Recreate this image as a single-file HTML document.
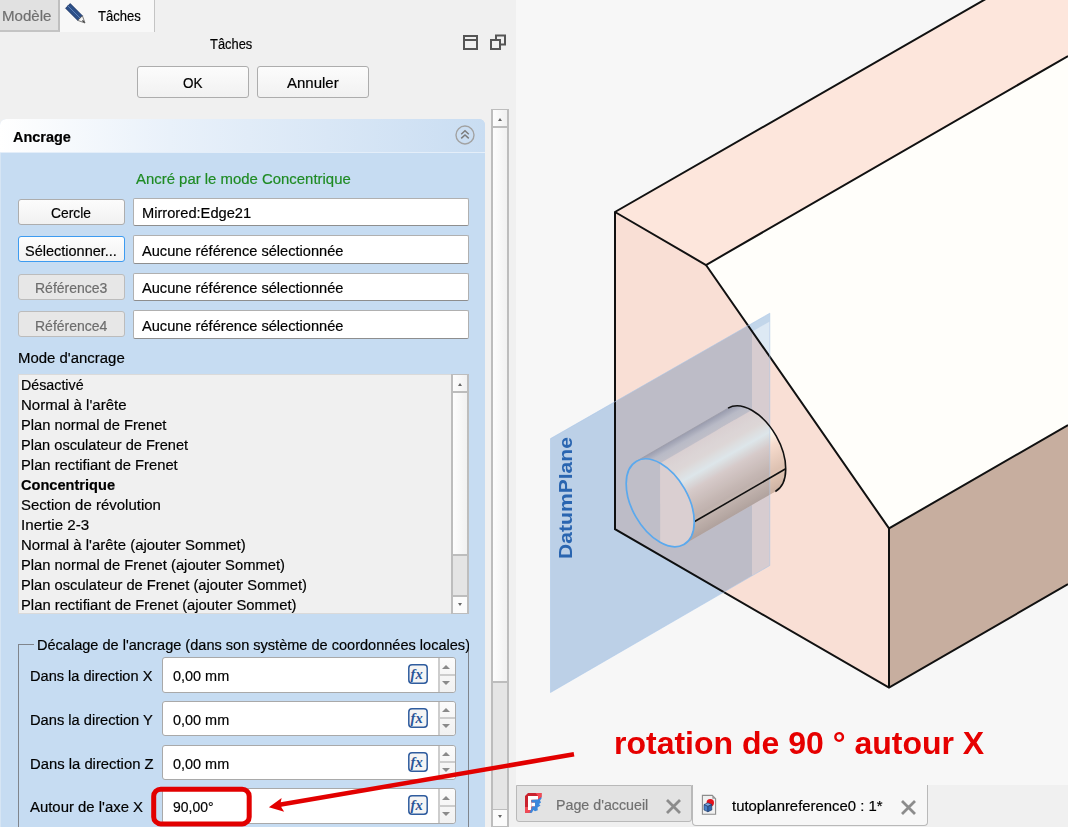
<!DOCTYPE html>
<html><head><meta charset="utf-8">
<style>
*{box-sizing:border-box;margin:0;padding:0}
html,body{width:1068px;height:827px;overflow:hidden;background:#f0f0f0;font-family:"Liberation Sans",sans-serif;color:#000}
.a{position:absolute}
.t{position:absolute;white-space:nowrap;font-size:14.7px;line-height:17px;transform-origin:0 0;-webkit-text-stroke:0.2px currentColor}
.btn{position:absolute;background:linear-gradient(#fcfcfc,#f1f1f1);border:1px solid #adadad;border-radius:3px}
.inp{position:absolute;background:#fff;border:1px solid #b0b0b0;border-bottom-color:#8e8e8e;border-radius:2px}
</style></head><body>
<!-- 3D view -->
<svg class="a" style="left:516px;top:0;isolation:isolate" width="552" height="786" viewBox="516 0 552 786">
<defs>
<linearGradient id="cyl" gradientUnits="userSpaceOnUse" x1="636.54" y1="461.15" x2="683.86" y2="544.45">
<stop offset="0" stop-color="#cdbcbc"/>
<stop offset="0.07" stop-color="#f3ddd4"/>
<stop offset="0.13" stop-color="#fbe2d6"/>
<stop offset="0.3" stop-color="#ffebdd"/>
<stop offset="0.42" stop-color="#fffbf0"/>
<stop offset="0.55" stop-color="#f7dcce"/>
<stop offset="0.8" stop-color="#ddc1b1"/>
<stop offset="0.83" stop-color="#e2c6b4"/>
<stop offset="1" stop-color="#cbb0a1"/>
</linearGradient>
<clipPath id="plane"><polygon points="550.5,438.6 769.8,313.2 769.8,565.5 550.5,692.5"/></clipPath>
<clipPath id="halfH"><polygon points="660.20,463.22 934.70,304.22 934.70,900 660.20,900"/></clipPath>
<mask id="mfull" maskUnits="userSpaceOnUse" x="516" y="0" width="552" height="786">
<polygon points="550.5,438.6 769.8,313.2 769.8,565.5 550.5,692.5" fill="#fff"/>
<polygon points="752,331.7 769.8,321.4 769.8,565.5 752,575.9" fill="#000"/>
<g clip-path="url(#halfH)"><path d="M728.04,408.15 A47.9,28.1 60.4 1 1 775.36,491.45 A47.9,28.1 60.4 1 1 728.04,408.15 Z" fill="#000"/><polygon points="636.54,461.15 728.04,408.15 775.36,491.45 683.86,544.45" fill="#000"/><path d="M636.54,461.15 A47.9,28.1 60.4 1 1 683.86,544.45 A47.9,28.1 60.4 1 1 636.54,461.15 Z" fill="#000"/></g>
</mask>
</defs>
<rect x="516" y="0" width="552" height="786" fill="#f7f7f7"/>
<polygon points="615,212 984.3,0 1068,0 1068,56 706,265" fill="#fde6dc"/>
<polygon points="706,265 1068,56 1068,425 889,528.4" fill="#fffefa"/>
<polygon points="615,212 706,265 889,528.4 889,687.5 615,529.2" fill="#f9dfd5"/>
<polygon points="889,528.4 1068,425 1068,584.2 889,687.5" fill="#c7ae9f"/>
<path d="M728.04,408.15 A47.9,28.1 60.4 1 1 775.36,491.45 A47.9,28.1 60.4 1 1 728.04,408.15 Z" fill="url(#cyl)"/>
<polygon points="636.54,461.15 728.04,408.15 775.36,491.45 683.86,544.45" fill="url(#cyl)"/>
<path d="M636.54,461.15 A47.9,28.1 60.4 1 1 683.86,544.45 A47.9,28.1 60.4 1 1 636.54,461.15 Z" fill="#fce2d6"/>
<g stroke="#111" stroke-width="2" fill="none" stroke-linejoin="miter">
<polyline points="1001.4,-10 615,212 615,529.2 889,687.5 1068,584.2"/>
<polyline points="615,212 706,265 1068,56"/>
<polyline points="706,265 889,528.4 1068,425"/>
<line x1="889" y1="528.4" x2="889" y2="687.5"/>
</g>
<g style="mix-blend-mode:multiply"><rect x="516" y="0" width="552" height="786" fill="#c2d7ef" mask="url(#mfull)"/></g>
<g style="mix-blend-mode:multiply" clip-path="url(#plane)">
<polygon points="752,331.7 769.8,321.4 769.8,565.5 752,575.9" fill="#ddeaf9"/>
<g clip-path="url(#halfH)"><path d="M728.04,408.15 A47.9,28.1 60.4 1 1 775.36,491.45 A47.9,28.1 60.4 1 1 728.04,408.15 Z" fill="#ddeaf9"/><polygon points="636.54,461.15 728.04,408.15 775.36,491.45 683.86,544.45" fill="#ddeaf9"/><path d="M636.54,461.15 A47.9,28.1 60.4 1 1 683.86,544.45 A47.9,28.1 60.4 1 1 636.54,461.15 Z" fill="#ddeaf9"/></g>
</g>
<polygon points="550.5,438.6 769.8,313.2 769.8,565.5 550.5,692.5" fill="none" stroke="#a9c6e8" stroke-width="0.8" opacity="0.7"/>

<line x1="636.54" y1="461.15" x2="728.04" y2="408.15" stroke="#9a9aa5" stroke-width="0.7"/>
<path d="M728.04,408.15 A47.9,28.1 60.4 0 1 775.36,491.45" fill="none" stroke="#111" stroke-width="1.6"/>
<line x1="694.21" y1="521.80" x2="785.71" y2="468.80" stroke="#111" stroke-width="1.6"/>
<path d="M636.54,461.15 A47.9,28.1 60.4 1 1 683.86,544.45 A47.9,28.1 60.4 1 1 636.54,461.15 Z" fill="none" stroke="#5aa9ee" stroke-width="1.7"/>
<text transform="translate(572,559) rotate(-90)" font-family="Liberation Sans" font-weight="bold" font-size="17.5" fill="#2a65b0" textLength="122" lengthAdjust="spacingAndGlyphs">DatumPlane</text>
<text x="614" y="754.3" font-family="Liberation Sans" font-weight="bold" font-size="32" fill="#e60000">rotation de 90 ° autour X</text>
</svg>

<!-- left panel -->
<div class="a" style="left:0;top:0;width:508px;height:827px;background:#f0f0f0"></div>

<div class="a" style="left:0;top:0;width:60px;height:32px;background:#e1e1e1;border-right:2px solid #bfbfbf;border-bottom:2px solid #c4c4c4"></div>
<div class="a" style="left:60px;top:0;width:95px;height:32px;background:#f8f8f8;border-right:1px solid #c4c4c4"></div>
<svg class="a" style="left:64px;top:2px" width="24" height="24" viewBox="0 0 24 24">
<polygon points="1.6,6.2 6.2,1.6 18.4,13.8 13.8,18.4" fill="#2c4f88" stroke="#18305e" stroke-width="0.8"/>
<line x1="3.5" y1="3.5" x2="16" y2="16" stroke="#5f82b8" stroke-width="1"/>
<polygon points="18.4,13.8 13.8,18.4 21,21" fill="#f4f4f4" stroke="#444" stroke-width="0.7"/>
<polygon points="19,18 18,19 20.8,20.8" fill="#111"/>
</svg>
<svg class="a" style="left:462px;top:34px" width="46" height="18" viewBox="0 0 46 18">
<rect x="2" y="2" width="13" height="13" fill="none" stroke="#555" stroke-width="2"/>
<line x1="2" y1="6" x2="15" y2="6" stroke="#555" stroke-width="2"/>
<rect x="34" y="1.5" width="9" height="9" fill="none" stroke="#555" stroke-width="2"/>
<rect x="29" y="6" width="9" height="9" fill="#f0f0f0" stroke="#555" stroke-width="2"/>
</svg>
<div class="btn" style="left:136.5px;top:65.5px;width:112px;height:32px"></div>
<div class="btn" style="left:256.5px;top:65.5px;width:112px;height:32px"></div>
<!-- outer scrollbar -->
<div class="a" style="left:491px;top:109px;width:18px;height:718px;background:linear-gradient(90deg,#fdfdfd,#f1f1f1);border:2px solid #bdbdbd;border-top-width:1px"></div>
<div class="a" style="left:492px;top:126px;width:16px;height:2px;background:#bcbcbc"></div>
<div class="a" style="left:497.8px;top:118px;width:0;height:0;border-left:2.5px solid transparent;border-right:2.5px solid transparent;border-bottom:3px solid #666"></div>
<div class="a" style="left:491px;top:681px;width:18px;height:129px;background:#e5e5e5;border:2px solid #bdbdbd;border-bottom-width:1px"></div>
<div class="a" style="left:491px;top:810px;width:18px;height:17px;background:#fbfbfb;border:2px solid #bdbdbd;border-top:none;border-bottom-width:1px"></div>
<div class="a" style="left:497.8px;top:815px;width:0;height:0;border-left:2.5px solid transparent;border-right:2.5px solid transparent;border-top:3px solid #666"></div>
<!-- panel -->
<div class="a" style="left:0;top:119px;width:485px;height:708px;background:#c6dcf2;border-radius:6px 6px 0 0;border-left:1px solid #d6e5f4"></div>
<div class="a" style="left:0;top:119px;width:485px;height:34px;background:linear-gradient(90deg,#ffffff 0%,#e9f1fa 35%,#c9ddf2 100%);border-radius:6px 6px 0 0;border-bottom:1px solid #e4eef9"></div>
<svg class="a" style="left:454px;top:124px" width="22" height="22" viewBox="0 0 22 22">
<circle cx="11" cy="11" r="9" fill="none" stroke="#a2a2a2" stroke-width="1.4"/>
<path d="M7.2,10.2 L11,6.8 L14.8,10.2 M7.2,14.4 L11,11 L14.8,14.4" fill="none" stroke="#7c7c7c" stroke-width="1.5"/>
</svg>
<div class="btn" style="left:18px;top:198.5px;width:106.5px;height:26px"></div>
<div class="inp" style="left:133px;top:197.5px;width:336px;height:28.5px"></div>
<div class="btn" style="left:18px;top:236.0px;width:106.5px;height:26px;border:1.5px solid #3d9bf0;background:linear-gradient(#fdfdfd,#f2f2f2)"></div>
<div class="inp" style="left:133px;top:235.0px;width:336px;height:28.5px"></div>
<div class="btn" style="left:18px;top:273.5px;width:106.5px;height:26px;background:#e7e7e7;border-color:#bcbcbc"></div>
<div class="inp" style="left:133px;top:272.5px;width:336px;height:28.5px"></div>
<div class="btn" style="left:18px;top:311.0px;width:106.5px;height:26px;background:#e7e7e7;border-color:#bcbcbc"></div>
<div class="inp" style="left:133px;top:310.0px;width:336px;height:28.5px"></div>
<div class="a" style="left:18px;top:374px;width:451px;height:240px;background:#f0f0f0;border:1px solid #dadada"></div>
<div class="a" style="left:451px;top:374px;width:18px;height:240px;background:linear-gradient(90deg,#fdfdfd,#f1f1f1);border:2px solid #bdbdbd;border-top-width:1px;border-bottom-width:1px"></div>
<div class="a" style="left:452px;top:391px;width:16px;height:2px;background:#bcbcbc"></div>
<div class="a" style="left:451px;top:554px;width:18px;height:43px;background:#e4e4e4;border:2px solid #bdbdbd"></div>
<div class="a" style="left:451px;top:596px;width:18px;height:18px;background:#fbfbfb;border:2px solid #bdbdbd;border-top-width:1px;border-bottom-width:1px"></div>
<div class="a" style="left:458px;top:383px;width:0;height:0;border-left:2.5px solid transparent;border-right:2.5px solid transparent;border-bottom:3px solid #666"></div>
<div class="a" style="left:458px;top:603px;width:0;height:0;border-left:2.5px solid transparent;border-right:2.5px solid transparent;border-top:3px solid #666"></div>
<div class="a" style="left:18px;top:644px;width:451px;height:200px;border:1px solid #80858c"></div>
<div class="a" style="left:34px;top:636px;width:434px;height:16px;background:#c6dcf2"></div>
<div class="inp" style="left:161.5px;top:657.00px;width:294px;height:35.5px;border-radius:3px;border-color:#a9a9a9"></div>
<div class="a" style="left:438px;top:658.00px;width:17px;height:33.5px;background:linear-gradient(#fbfbfb,#f1f1f1);border-left:2px solid #cdcdcd;border-radius:0 3px 3px 0"></div>
<div class="a" style="left:438px;top:673.50px;width:17px;height:2px;background:#cdcdcd"></div>
<div class="a" style="left:442px;top:664.50px;width:0;height:0;border-left:4px solid transparent;border-right:4px solid transparent;border-bottom:4.5px solid #8a8a8a"></div>
<div class="a" style="left:442px;top:680.50px;width:0;height:0;border-left:4px solid transparent;border-right:4px solid transparent;border-top:4.5px solid #8a8a8a"></div>
<svg class="a" style="left:408px;top:664.00px" width="20" height="20" viewBox="0 0 20 20"><rect x="0.8" y="0.8" width="18.4" height="18.4" rx="3.2" fill="#f4f4f4" stroke="#2f5c9e" stroke-width="1.5"/><text x="2.6" y="14.6" font-family="Liberation Serif" font-style="italic" font-size="14.5" fill="#2a5598" font-weight="bold">fx</text></svg>
<div class="inp" style="left:161.5px;top:700.75px;width:294px;height:35.5px;border-radius:3px;border-color:#a9a9a9"></div>
<div class="a" style="left:438px;top:701.75px;width:17px;height:33.5px;background:linear-gradient(#fbfbfb,#f1f1f1);border-left:2px solid #cdcdcd;border-radius:0 3px 3px 0"></div>
<div class="a" style="left:438px;top:717.25px;width:17px;height:2px;background:#cdcdcd"></div>
<div class="a" style="left:442px;top:708.25px;width:0;height:0;border-left:4px solid transparent;border-right:4px solid transparent;border-bottom:4.5px solid #8a8a8a"></div>
<div class="a" style="left:442px;top:724.25px;width:0;height:0;border-left:4px solid transparent;border-right:4px solid transparent;border-top:4.5px solid #8a8a8a"></div>
<svg class="a" style="left:408px;top:707.75px" width="20" height="20" viewBox="0 0 20 20"><rect x="0.8" y="0.8" width="18.4" height="18.4" rx="3.2" fill="#f4f4f4" stroke="#2f5c9e" stroke-width="1.5"/><text x="2.6" y="14.6" font-family="Liberation Serif" font-style="italic" font-size="14.5" fill="#2a5598" font-weight="bold">fx</text></svg>
<div class="inp" style="left:161.5px;top:744.50px;width:294px;height:35.5px;border-radius:3px;border-color:#a9a9a9"></div>
<div class="a" style="left:438px;top:745.50px;width:17px;height:33.5px;background:linear-gradient(#fbfbfb,#f1f1f1);border-left:2px solid #cdcdcd;border-radius:0 3px 3px 0"></div>
<div class="a" style="left:438px;top:761.00px;width:17px;height:2px;background:#cdcdcd"></div>
<div class="a" style="left:442px;top:752.00px;width:0;height:0;border-left:4px solid transparent;border-right:4px solid transparent;border-bottom:4.5px solid #8a8a8a"></div>
<div class="a" style="left:442px;top:768.00px;width:0;height:0;border-left:4px solid transparent;border-right:4px solid transparent;border-top:4.5px solid #8a8a8a"></div>
<svg class="a" style="left:408px;top:751.50px" width="20" height="20" viewBox="0 0 20 20"><rect x="0.8" y="0.8" width="18.4" height="18.4" rx="3.2" fill="#f4f4f4" stroke="#2f5c9e" stroke-width="1.5"/><text x="2.6" y="14.6" font-family="Liberation Serif" font-style="italic" font-size="14.5" fill="#2a5598" font-weight="bold">fx</text></svg>
<div class="inp" style="left:161.5px;top:788.25px;width:294px;height:35.5px;border-radius:3px;border-color:#a9a9a9"></div>
<div class="a" style="left:438px;top:789.25px;width:17px;height:33.5px;background:linear-gradient(#fbfbfb,#f1f1f1);border-left:2px solid #cdcdcd;border-radius:0 3px 3px 0"></div>
<div class="a" style="left:438px;top:804.75px;width:17px;height:2px;background:#cdcdcd"></div>
<div class="a" style="left:442px;top:795.75px;width:0;height:0;border-left:4px solid transparent;border-right:4px solid transparent;border-bottom:4.5px solid #8a8a8a"></div>
<div class="a" style="left:442px;top:811.75px;width:0;height:0;border-left:4px solid transparent;border-right:4px solid transparent;border-top:4.5px solid #8a8a8a"></div>
<svg class="a" style="left:408px;top:795.25px" width="20" height="20" viewBox="0 0 20 20"><rect x="0.8" y="0.8" width="18.4" height="18.4" rx="3.2" fill="#f4f4f4" stroke="#2f5c9e" stroke-width="1.5"/><text x="2.6" y="14.6" font-family="Liberation Serif" font-style="italic" font-size="14.5" fill="#2a5598" font-weight="bold">fx</text></svg>
<!-- bottom tab bar -->
<div class="a" style="left:509px;top:785px;width:559px;height:42px;background:#f0f0f0"></div>
<div class="a" style="left:509px;top:0;width:7px;height:827px;background:#f0f0f0"></div>
<div class="a" style="left:516px;top:785px;width:176px;height:37px;background:#e3e3e3;border:1px solid #b9b9b9;border-radius:0 0 3px 3px"></div>
<svg class="a" style="left:520px;top:789px" width="28" height="28" viewBox="0 0 28 28">
<polygon points="5,7 8,4 21.5,4 21.5,8 11,23.7 5,23.7" fill="#c9222e"/>
<polygon points="15.5,4 21.5,4 21.5,8 18,10.5 18,7" fill="#f24a55"/>
<polygon points="5,18 8,18 8,21 11.5,21 10,23.7 5,23.7" fill="#f24a55"/>
<polygon points="8,7 18,7 18,10.8 11.3,10.8 11.3,21 8,21" fill="#ffffff"/>
<rect x="11.3" y="13.5" width="3.7" height="4" fill="#ffffff"/>
<polygon points="18,10.5 21.5,8 21.5,9.5 20,11.5 21,13.5 19,15 20.5,16.5 17.5,18.5 17.8,21.2 15,22.3 13.2,21 12,23.7 9.5,23.7 11.3,19.8 11.3,21 12,17.5 15,17.5 15,13.5 11.5,13.5 11.5,11" fill="#3a87dc"/>
</svg>
<svg class="a" style="left:665px;top:798px" width="17" height="17" viewBox="0 0 17 17"><path d="M2,2 L15,15 M15,2 L2,15" stroke="#8c8c8c" stroke-width="2.8"/></svg>
<div class="a" style="left:692px;top:785px;width:236px;height:41px;background:#f7f7f7;border:1px solid #b9b9b9;border-top:none;border-radius:0 0 4px 4px"></div>
<svg class="a" style="left:696px;top:790px" width="26" height="28" viewBox="0 0 26 28">
<path d="M6.4,5.4 L16.3,5.4 L19.6,8.7 L19.6,24.3 L6.4,24.3 Z" fill="#f0f0f0" stroke="#8c8c8c" stroke-width="1.1"/>
<path d="M16.3,5.4 L16.3,8.7 L19.6,8.7 Z" fill="#9a9a9a"/>
<circle cx="14.3" cy="12.8" r="3.7" fill="#e3121b"/>
<polygon points="8,14.6 11.9,12.8 15.8,14.6 11.9,16.4" fill="#7ea9e2" stroke="#17335e" stroke-width="0.6"/>
<polygon points="8,14.6 11.9,16.4 11.9,21.8 8,20" fill="#4a80c8" stroke="#17335e" stroke-width="0.6"/>
<polygon points="11.9,16.4 15.8,14.6 15.8,20 11.9,21.8" fill="#3266ad" stroke="#17335e" stroke-width="0.6"/>
</svg>
<svg class="a" style="left:900px;top:799px" width="17" height="17" viewBox="0 0 17 17"><path d="M2,2 L15,15 M15,2 L2,15" stroke="#8c8c8c" stroke-width="2.8"/></svg>

<div class="t" style="left:2.2px;top:6.70px;font-size:15.3px;transform:scaleX(0.987);color:#6f6f6f">Modèle</div>
<div class="t" style="left:98.0px;top:6.70px;font-size:15.3px;transform:scaleX(0.853);">Tâches</div>
<div class="t" style="left:210.1px;top:35.20px;font-size:15.3px;transform:scaleX(0.843);">Tâches</div>
<div class="t" style="left:182.7px;top:74.20px;font-size:15.3px;transform:scaleX(0.882);">OK</div>
<div class="t" style="left:286.8px;top:74.20px;font-size:15.3px;transform:scaleX(0.980);">Annuler</div>
<div class="t" style="left:12.6px;top:128.20px;font-size:15.3px;font-weight:bold;transform:scaleX(0.946);">Ancrage</div>
<div class="t" style="left:135.9px;top:170.40px;font-size:15.3px;transform:scaleX(0.975);color:#1f8b24">Ancré par le mode Concentrique</div>
<div class="t" style="left:51.2px;top:204.20px;font-size:15.3px;transform:scaleX(0.903);color:#000">Cercle</div>
<div class="t" style="left:141.6px;top:204.20px;font-size:15.3px;transform:scaleX(0.958);">Mirrored:Edge21</div>
<div class="t" style="left:25.2px;top:241.65px;font-size:15.3px;transform:scaleX(0.948);color:#000">Sélectionner...</div>
<div class="t" style="left:141.6px;top:241.65px;font-size:15.3px;transform:scaleX(0.955);">Aucune référence sélectionnée</div>
<div class="t" style="left:35.0px;top:279.10px;font-size:15.3px;transform:scaleX(0.915);color:#6d6d6d">Référence3</div>
<div class="t" style="left:141.6px;top:279.10px;font-size:15.3px;transform:scaleX(0.955);">Aucune référence sélectionnée</div>
<div class="t" style="left:35.0px;top:316.55px;font-size:15.3px;transform:scaleX(0.915);color:#6d6d6d">Référence4</div>
<div class="t" style="left:141.6px;top:316.55px;font-size:15.3px;transform:scaleX(0.955);">Aucune référence sélectionnée</div>
<div class="t" style="left:18.0px;top:349.20px;font-size:15.3px;transform:scaleX(0.977);">Mode d'ancrage</div>
<div class="t" style="left:21.2px;top:376.20px;font-size:15.3px;transform:scaleX(0.932);">Désactivé</div>
<div class="t" style="left:21.2px;top:396.20px;font-size:15.3px;transform:scaleX(0.982);">Normal à l'arête</div>
<div class="t" style="left:21.2px;top:416.20px;font-size:15.3px;transform:scaleX(0.961);">Plan normal de Frenet</div>
<div class="t" style="left:21.2px;top:436.20px;font-size:15.3px;transform:scaleX(0.954);">Plan osculateur de Frenet</div>
<div class="t" style="left:21.2px;top:456.20px;font-size:15.3px;transform:scaleX(0.965);">Plan rectifiant de Frenet</div>
<div class="t" style="left:21.2px;top:476.20px;font-size:15.3px;font-weight:bold;transform:scaleX(0.954);">Concentrique</div>
<div class="t" style="left:21.2px;top:496.20px;font-size:15.3px;transform:scaleX(0.979);">Section de révolution</div>
<div class="t" style="left:21.2px;top:516.20px;font-size:15.3px;transform:scaleX(0.990);">Inertie 2-3</div>
<div class="t" style="left:21.2px;top:536.20px;font-size:15.3px;transform:scaleX(0.977);">Normal à l'arête (ajouter Sommet)</div>
<div class="t" style="left:21.2px;top:556.20px;font-size:15.3px;transform:scaleX(0.964);">Plan normal de Frenet (ajouter Sommet)</div>
<div class="t" style="left:21.2px;top:576.20px;font-size:15.3px;transform:scaleX(0.961);">Plan osculateur de Frenet (ajouter Sommet)</div>
<div class="t" style="left:21.2px;top:596.20px;font-size:15.3px;transform:scaleX(0.967);">Plan rectifiant de Frenet (ajouter Sommet)</div>
<div class="t" style="left:36.5px;top:636.00px;font-size:15.3px;transform:scaleX(0.951);">Décalage de l'ancrage (dans son système de coordonnées locales)</div>
<div class="t" style="left:30.4px;top:667.20px;font-size:15.3px;transform:scaleX(0.953);">Dans la direction X</div>
<div class="t" style="left:172.6px;top:667.20px;font-size:15.3px;transform:scaleX(0.944);">0,00 mm</div>
<div class="t" style="left:30.4px;top:710.95px;font-size:15.3px;transform:scaleX(0.959);">Dans la direction Y</div>
<div class="t" style="left:172.6px;top:710.95px;font-size:15.3px;transform:scaleX(0.944);">0,00 mm</div>
<div class="t" style="left:30.4px;top:754.70px;font-size:15.3px;transform:scaleX(0.969);">Dans la direction Z</div>
<div class="t" style="left:172.6px;top:754.70px;font-size:15.3px;transform:scaleX(0.944);">0,00 mm</div>
<div class="t" style="left:30.4px;top:798.45px;font-size:15.3px;transform:scaleX(0.974);">Autour de l'axe X</div>
<div class="t" style="left:172.6px;top:798.45px;font-size:15.3px;transform:scaleX(0.912);">90,00°</div>
<div class="t" style="left:555.9px;top:796.00px;font-size:15.3px;transform:scaleX(0.932);color:#707070">Page d'accueil</div>
<div class="t" style="left:732.0px;top:796.70px;font-size:15.3px;transform:scaleX(0.972);">tutoplanreference0 : 1*</div>
<div class="a" id="legendclip" style="left:469.3px;top:636px;width:15.7px;height:17px;background:#c6dcf2"></div>
<!-- annotations -->
<svg class="a" style="left:0;top:0" width="1068" height="827" viewBox="0 0 1068 827">
<rect x="153.7" y="789.3" width="95.5" height="34.6" rx="7" fill="none" stroke="#e20000" stroke-width="5"/>
<line x1="574" y1="754.3" x2="278" y2="805" stroke="#e20000" stroke-width="4.6"/>
<polygon points="268.9,807.3 281.6,798 280.5,803.5 281.6,807.7 284.2,811.8" fill="#e20000"/>
</svg>

</body></html>
